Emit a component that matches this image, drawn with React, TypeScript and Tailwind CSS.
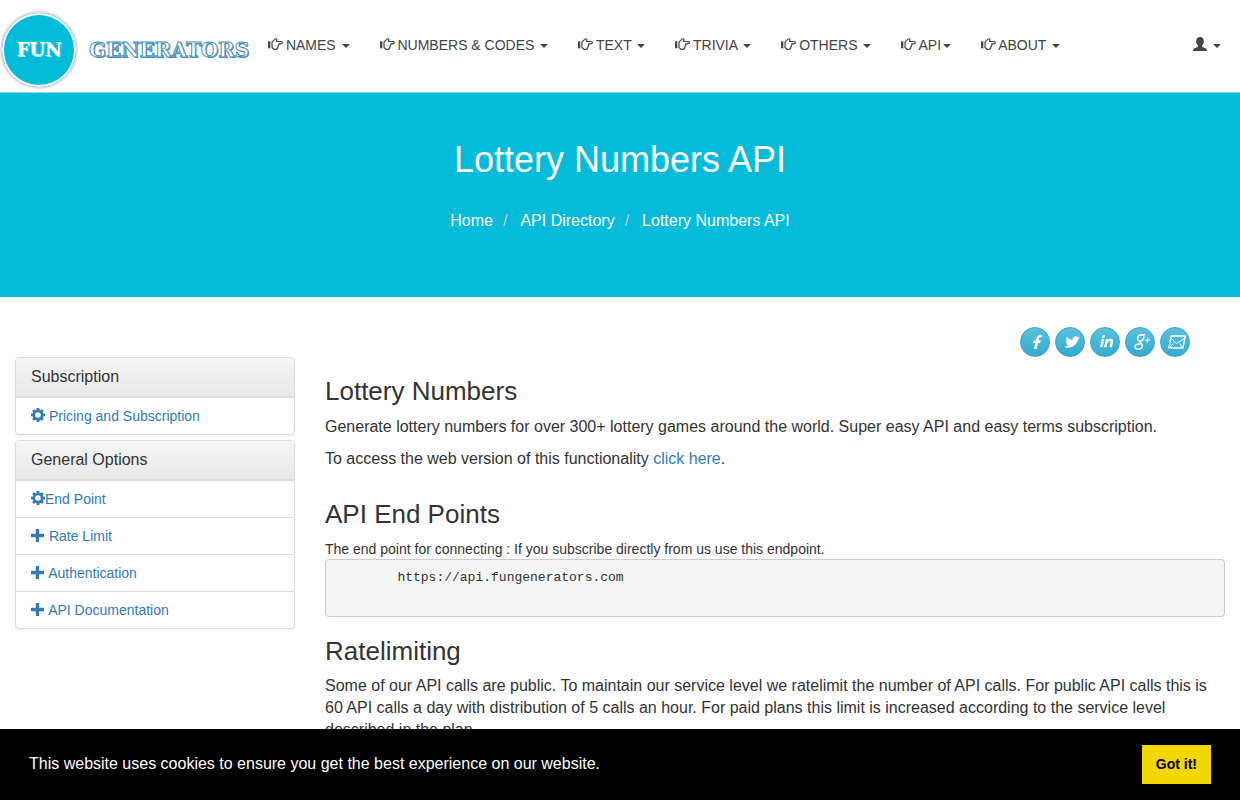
import { useState } from 'react';
import type { ReactNode } from 'react';
import { FaFacebookF, FaLinkedinIn, FaTwitter } from 'react-icons/fa';

const menus = [
  { label: 'NAMES', spaced: true },
  { label: 'NUMBERS & CODES', spaced: true },
  { label: 'TEXT', spaced: true },
  { label: 'TRIVIA', spaced: true },
  { label: 'OTHERS', spaced: true },
  { label: 'API', spaced: false },
  { label: 'ABOUT', spaced: true },
];

const generalOptions = [
  { label: 'End Point', icon: 'cog', spaced: false },
  { label: 'Rate Limit', icon: 'plus', spaced: true },
  { label: 'Authentication', icon: 'plus', spaced: true },
  { label: 'API Documentation', icon: 'plus', spaced: true },
];

function HandIcon() {
  return (
    <svg viewBox="0 0 14 14" className="inline-block size-3.5 overflow-visible align-[-2px]" aria-hidden="true">
      <path d="M0 3.300h2.300v7H0z" fill="currentColor" />
      <path
        d="M4 4.100 7 1.100c.7-.6 1.700-.4 1.900.3.100.7-.3 1.300-.6 2.100h5c1.500 0 1.500 2.100 0 2.200l-2.600.2c.4.600.2 1.200-.3 1.500.1.700-.1 1.200-.6 1.600 0 1.500-.6 2.300-1.800 2.300H6.600c-1 0-1.800-1.200-2.600-1.700z"
        fill="none"
        stroke="currentColor"
        strokeWidth="1.200"
        strokeLinejoin="round"
      />
    </svg>
  );
}

function CogIcon() {
  return (
    <svg viewBox="0 0 14 14" className="inline-block size-3.5 align-[-1px]" aria-hidden="true">
      <g fill="currentColor">
        <path d="M5.700 0h2.600l.5 2.600H5.200zM5.700 14h2.600l.5-2.600H5.200zM0 5.700v2.600l2.600.5V5.200zM14 5.700v2.600l-2.600.5V5.200z" />
        <path d="M1.200 3 3 1.200l2.200 1.500-2.500 2.500zM12.800 3 11 1.200 8.800 2.700l2.500 2.500zM1.200 11 3 12.800l2.200-1.500-2.500-2.500zM12.800 11 11 12.800l-2.200-1.500 2.500-2.500z" />
      </g>
      <circle cx="7" cy="7" r="4" fill="none" stroke="currentColor" strokeWidth="2.400" />
    </svg>
  );
}

function PlusIcon() {
  return (
    <svg viewBox="0 0 14 14" className="inline-block size-3.5 align-[-2px]" aria-hidden="true">
      <path
        d="M5.300 0h2.400q.5 0 .5.500v4.300h4.300q.5 0 .5.500v2.400q0 .5-.5.500H8.200v4.300q0 .5-.5.500H5.300q-.5 0-.5-.5V8.200H.5Q0 8.200 0 7.700V5.300q0-.5.5-.5h4.300V.5q0-.5.5-.5z"
        fill="currentColor"
      />
    </svg>
  );
}

function UserIcon() {
  return (
    <svg viewBox="0 0 14 14" className="inline-block size-3.5 align-[-1px]" aria-hidden="true">
      <path
        d="M7 0c2.300 0 3.700 1.300 3.700 3.300v1.100c.5.200.4 1-.2 1.800-.3 1-.8 1.700-1.400 2.200v1.100c.5.700 1.500 1 2.800 1.500 1.400.5 2.100 1 2.100 3H0c0-2 .7-2.500 2.100-3 1.300-.5 2.300-.8 2.800-1.500V8.400C4.300 7.900 3.800 7.200 3.500 6.200c-.6-.8-.7-1.600-.2-1.800V3.300C3.300 1.300 4.700 0 7 0z"
        fill="currentColor"
      />
    </svg>
  );
}

function GooglePlusIcon() {
  return (
    <svg viewBox="0 0 18 18" className="size-[18px]" fill="none" stroke="currentColor" aria-hidden="true">
      <path
        d="M12.200 1.700H8.900C6.500 1.700 4.800 3.200 4.500 5c-.3 1.700.8 2.900 2.500 2.900 2 0 3.500-1.500 3.700-3.300.2-1.500-.5-2.500-1.700-2.700"
        strokeWidth="1.400"
      />
      <path
        d="M7.700 7.900c-1.100.9-.6 1.500.3 2.200 1.200.9 1.700 1.500 1.400 2.900-.4 2-2.200 3.200-4.500 3.200-2 0-3.200-.9-3-2.400.3-1.900 2.700-2.900 6-3"
        strokeWidth="1.400"
      />
      <path d="m14.900 4.700-.7 4.800M12.200 7.100h4.800" strokeWidth="1.100" />
    </svg>
  );
}

function EnvelopeIcon() {
  return (
    <svg
      viewBox="0 0 18 14"
      className="h-3.5 w-[18px]"
      fill="none"
      stroke="currentColor"
      strokeLinejoin="round"
      aria-hidden="true"
    >
      <path d="M3.300 1h14L14.900 13H.9z" strokeWidth="1.400" />
      <path d="m3 3 4.500 4.800c.6.600 1.500.6 2.300 0L17 3M1.200 12.600l4.400-4M14.700 12.600l-2.800-4" strokeWidth="1" />
    </svg>
  );
}

function Caret() {
  return (
    <span className="ml-0.5 inline-block border-x-4 border-t-4 border-x-transparent border-t-current align-middle" />
  );
}

function SocialLink({ label, children }: { label: string; children: ReactNode }) {
  return (
    <a
      href="#"
      aria-label={label}
      className="flex size-[30px] items-center justify-center rounded-full border border-[#3ba3c4] bg-gradient-to-b from-[#5bc0de] to-[#2fabce] pl-1 text-white"
    >
      {children}
    </a>
  );
}

function Panel({ title, children }: { title: string; children: ReactNode }) {
  return (
    <section className="overflow-hidden rounded border border-[#ddd] bg-white shadow-[0_1px_2px_rgba(0,0,0,0.05)]">
      <h4 className="border-b border-[#ddd] bg-gradient-to-b from-[#f5f5f5] to-[#e8e8e8] px-[15px] py-2.5 text-base leading-[18px]">
        {title}
      </h4>
      <ul>{children}</ul>
    </section>
  );
}

function PanelItem({ icon, label, spaced }: { icon: string; label: string; spaced: boolean }) {
  return (
    <li className="border-t border-[#ddd] px-[15px] py-2 text-sm leading-5">
      <a href="#" className="text-[#337ab7] hover:underline">
        {icon === 'cog' ? <CogIcon /> : <PlusIcon />}
        {spaced && ' '}
        {label}
      </a>
    </li>
  );
}

function Header() {
  return (
    <header className="flex border-b border-[#8fd6e2] bg-white text-sm text-[#444]">
      <a
        href="#"
        className="flex h-[92px] w-[253px] shrink-0 items-center pt-2 font-['DejaVu_Serif',serif] font-bold"
      >
        <span className="flex size-[78px] shrink-0 items-center justify-center rounded-full border-2 border-[#e0dce6] bg-[#04bcd9] text-lg text-white ring-2 ring-[#f4fbfd] ring-inset [text-shadow:1px_1px_0_#a5e6f0]">
          FUN
        </span>
        <span className="ml-[11px] text-xl text-white [-webkit-text-stroke:1px_#4a90b8] [text-shadow:1px_1px_0_#4a90b8]">
          GENERATORS
        </span>
      </a>
      <nav className="flex grow items-start justify-between pt-5">
        <ul className="flex">
          {menus.map((menu) => (
            <li key={menu.label}>
              <button type="button" className="px-[15px] py-[15px] leading-5 whitespace-nowrap">
                <HandIcon /> {menu.label}
                {menu.spaced && ' '}
                <Caret />
              </button>
            </li>
          ))}
        </ul>
        <button type="button" aria-label="Account" className="mr-1 px-[15px] py-[15px] leading-5 whitespace-nowrap">
          <UserIcon /> <Caret />
        </button>
      </nav>
    </header>
  );
}

function Hero() {
  return (
    <div className="bg-[#04bcd9] pt-[47px] pb-[65px] text-center text-white">
      <h1 className="text-4xl leading-10">Lottery Numbers API</h1>
      <ol className="mt-[30px] flex justify-center text-base leading-[22px]">
        <li>
          <a href="#">Home</a>
        </li>
        <li>
          <span className="pr-[13px] pl-2.5 text-[#ccc]">/</span>
          <a href="#">API Directory</a>
        </li>
        <li>
          <span className="pr-[13px] pl-2.5 text-[#ccc]">/</span>
          Lottery Numbers API
        </li>
      </ol>
    </div>
  );
}

export default function App() {
  const [showCookies, setShowCookies] = useState(true);

  return (
    <div className="min-h-screen bg-white font-['Liberation_Sans',Arial,sans-serif] text-[#333]">
      <Header />
      <Hero />

      <div className="flex">
        <aside className="flex w-1/4 flex-col gap-[5px] px-[15px] pt-[60px]">
          <Panel title="Subscription">
            <PanelItem icon="cog" label="Pricing and Subscription" spaced />
          </Panel>
          <Panel title="General Options">
            {generalOptions.map((option) => (
              <PanelItem key={option.label} {...option} />
            ))}
          </Panel>
        </aside>

        <main className="w-3/4 px-[15px] pt-[30px]">
          <div className="mr-[35px] flex justify-end gap-[5px]">
            <SocialLink label="Facebook">
              <FaFacebookF className="size-3.5 -skew-x-12" />
            </SocialLink>
            <SocialLink label="Twitter">
              <FaTwitter className="size-3.5 -skew-x-12" />
            </SocialLink>
            <SocialLink label="LinkedIn">
              <FaLinkedinIn className="size-3.5 -skew-x-12" />
            </SocialLink>
            <SocialLink label="Google Plus">
              <GooglePlusIcon />
            </SocialLink>
            <SocialLink label="Email">
              <EnvelopeIcon />
            </SocialLink>
          </div>

          <h2 className="mt-5 text-[26px] leading-7">Lottery Numbers</h2>
          <p className="mt-[11px] text-base leading-[22px]">
            Generate lottery numbers for over 300+ lottery games around the world. Super easy API and easy terms
            subscription.
          </p>
          <p className="mt-2.5 text-base leading-[22px]">
            To access the web version of this functionality{' '}
            <a href="#" className="text-[#337ab7] hover:underline">
              click here
            </a>
            .
          </p>

          <h2 className="mt-[30px] text-[26px] leading-7">API End Points</h2>
          <p className="mt-[11px] text-sm leading-5">
            The end point for connecting : If you subscribe directly from us use this endpoint.
          </p>
          <pre className="rounded border border-[#ccc] bg-[#f5f5f5] px-[9px] pt-[9px] pb-[11px] font-['Liberation_Mono',monospace] text-[13px] leading-[18px]">
            {'        https://api.fungenerators.com\n        \n'}
          </pre>

          <h2 className="mt-5 text-[26px] leading-7">Ratelimiting</h2>
          <p className="mt-2.5 text-base leading-[22px]">
            Some of our API calls are public. To maintain our service level we ratelimit the number of API calls. For
            public API calls this is 60 API calls a day with distribution of 5 calls an hour. For paid plans this limit
            is increased according to the service level described in the plan.
          </p>
        </main>
      </div>

      {showCookies && (
        <div
          role="dialog"
          aria-label="Cookie consent"
          className="fixed inset-x-0 bottom-0 flex items-center justify-between bg-black px-[29px] py-4 text-base leading-6 text-white"
        >
          <span className="pb-0.5">This website uses cookies to ensure you get the best experience on our website.</span>
          <button
            type="button"
            onClick={() => setShowCookies(false)}
            className="bg-[#f1d600] px-3.5 py-2 text-sm leading-[23px] font-bold text-black"
          >
            Got it!
          </button>
        </div>
      )}
    </div>
  );
}
